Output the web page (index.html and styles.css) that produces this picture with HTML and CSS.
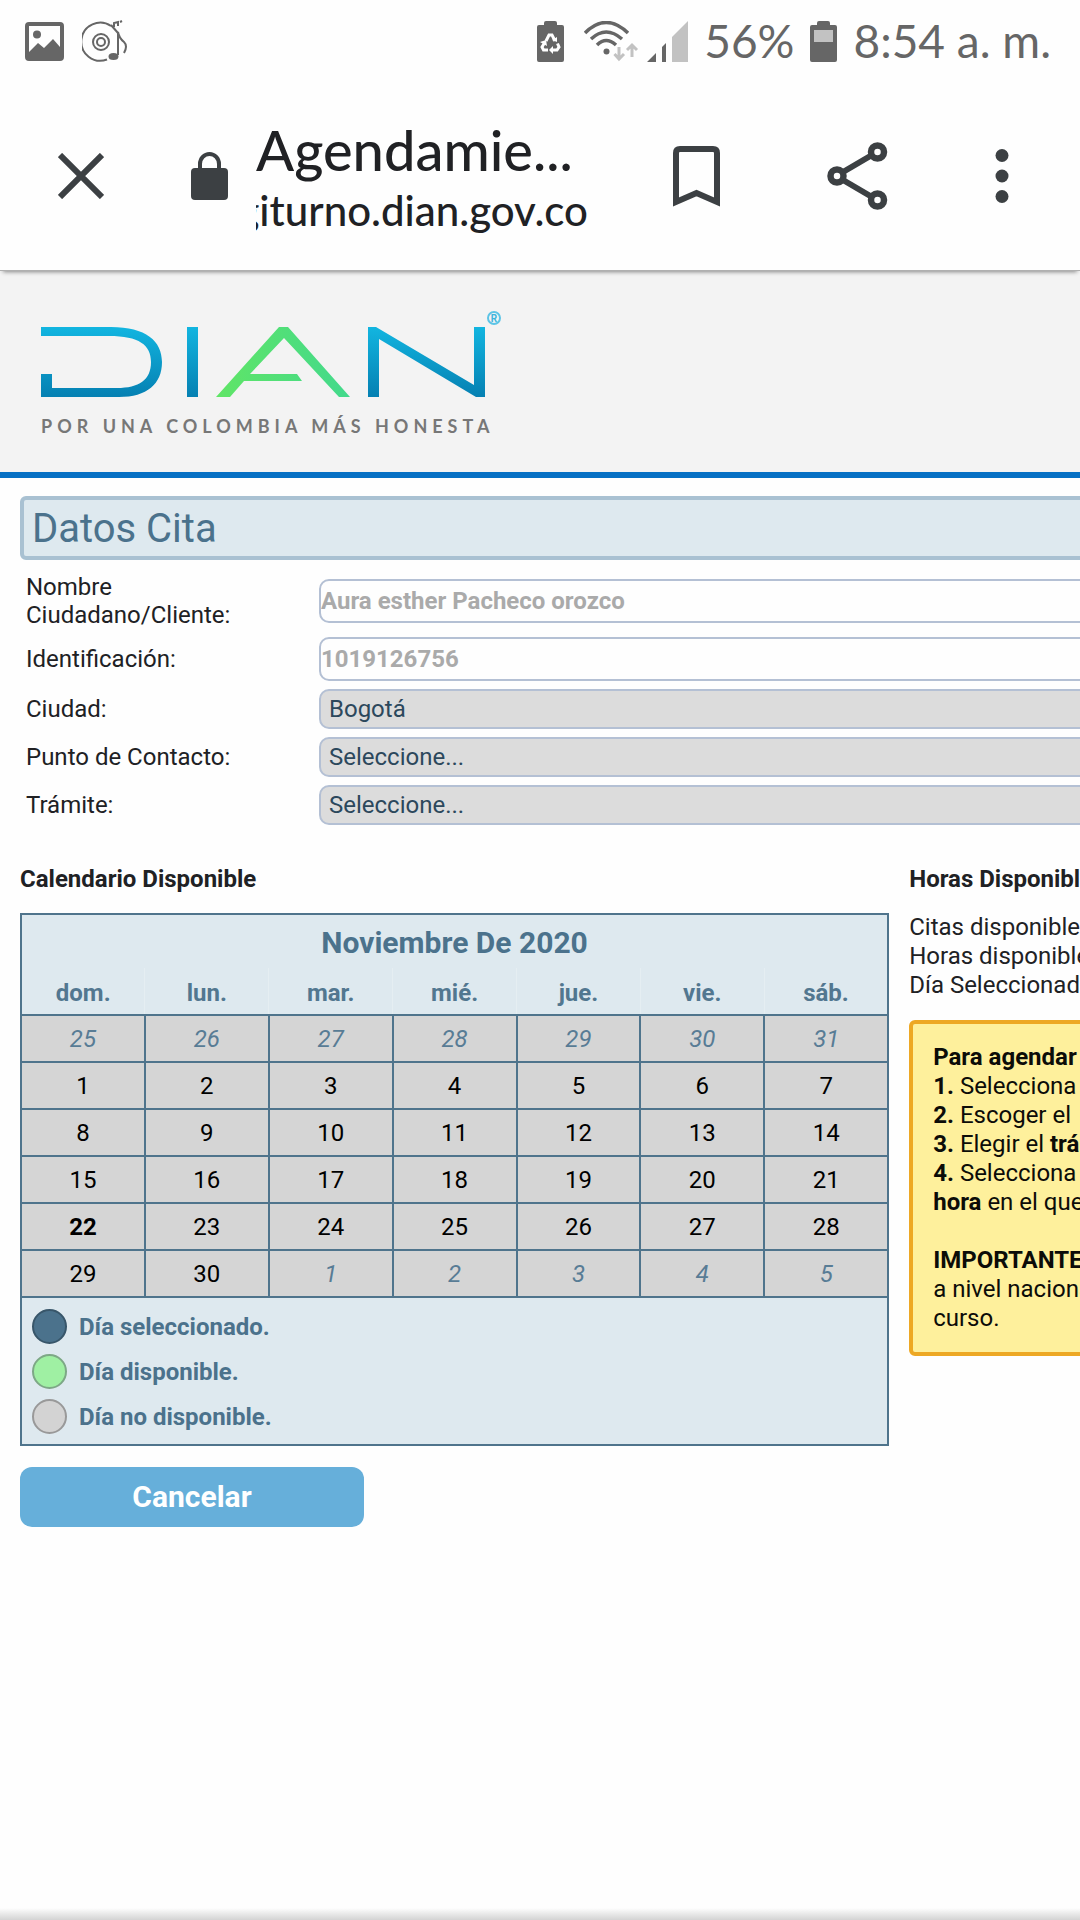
FILE: index.html
```html
<!DOCTYPE html>
<html lang="es">
<head>
<meta charset="utf-8">
<meta name="viewport" content="width=device-width, initial-scale=1">
<title>Agendamiento</title>
<link rel="stylesheet" href="styles.css">
</head>
<body>
<div class="status">
  <div class="status-group">
    <svg width="39" height="39" viewBox="0 0 39 39"><path fill="#666" fill-rule="evenodd" d="M4 0H35Q39 0 39 4V35Q39 39 35 39H4Q0 39 0 35V4Q0 0 4 0ZM4 4V30L13 21L19 26L28 17L35 25V4Z"/><circle cx="12" cy="12.500" r="4" fill="#666"/></svg>
    <svg width="46" height="42" viewBox="0 0 46 42" fill="none" stroke="#666" stroke-width="2"><path d="M29 6A19 19 0 1 0 25 39.500"/><circle cx="19" cy="22" r="8"/><circle cx="19" cy="22" r="4"/><path d="M29 5L36 13V35M36 12Q37 18 42 22Q46 26 42 33"/><ellipse cx="31.500" cy="36.500" rx="4" ry="2.500" fill="#666"/><path d="M32 7V3L36 2V6M38 2L40 1"/></svg>
  </div>
  <div class="status-group status-right">
    <svg width="27" height="41" viewBox="0 0 27 41"><path fill="#666" d="M7 4V2Q7 0 9 0H18Q20 0 20 2V4H25Q27 4 27 6V39Q27 41 25 41H2Q0 41 0 39V6Q0 4 2 4Z"/><path fill="none" stroke="#fff" stroke-width="3" d="M9 20L12 14H15L18 20M20.500 22.500L22 26L20 29H15M11 29H6.500L5 26L8 21"/><path fill="#fff" d="M15 19L20 21L20 16ZM16 25V33L12 29ZM3 21L9 19L10 25Z"/></svg>
    <svg class="wifi" width="55" height="41" viewBox="0 0 55 41" fill="none"><path stroke="#666" stroke-width="3.500" d="M1 12Q22 -9 44 12M7 18Q22 4 38 18M13 24Q22 15 32 24"/><circle cx="22.500" cy="30.500" r="3" fill="#666"/><path stroke="#c2c2c2" stroke-width="3" d="M35 26V38M30.500 33L35 38L40 33M48 36V24M43 29L48 24L53 29"/></svg>
    <svg width="41" height="41" viewBox="0 0 41 41"><path fill="#666" d="M0 41L9 32V41ZM15 26L19 22V41H15Z"/><path fill="#c2c2c2" d="M25 16L41 0V41H25Z"/></svg>
    <span>56%</span>
    <svg width="27" height="41" viewBox="0 0 27 41"><path fill="#666" d="M7 4V2Q7 0 9 0H18Q20 0 20 2V4H25Q27 4 27 6V39Q27 41 25 41H2Q0 41 0 39V6Q0 4 2 4Z"/><path fill="#c2c2c2" d="M4 9H23V21H4Z"/></svg>
    <span>8:54 a. m.</span>
  </div>
</div>
<header class="toolbar">
  <button class="tool" type="button" aria-label="Cerrar"><svg width="46" height="46" viewBox="0 0 46 46"><path stroke="#3c4043" stroke-width="6" d="M2 2L44 44M44 2L2 44"/></svg></button>
  <svg class="lock" width="37" height="48" viewBox="0 0 37 48"><rect y="16" width="37" height="32" rx="4" fill="#3c4043"/><path fill="none" stroke="#3c4043" stroke-width="4" d="M9 18V12A9.500 10 0 0 1 28 12V18"/></svg>
  <div class="address">
    <h1 class="page-name">Agendamie...</h1>
    <div class="url">giturno.dian.gov.co</div>
  </div>
  <div class="tools">
    <button class="tool" type="button" aria-label="Guardar"><svg width="47" height="61" viewBox="0 0 47 61"><path fill="none" stroke="#3c4043" stroke-width="6" d="M3 56V7Q3 3 7 3H40Q44 3 44 7V56L23.500 47Z"/></svg></button>
    <button class="tool" type="button" aria-label="Compartir"><svg width="61" height="68" viewBox="0 0 61 68" fill="none" stroke="#3c4043" stroke-width="6.500"><circle cx="10" cy="34" r="6.500"/><circle cx="50.500" cy="10" r="6.500"/><circle cx="50.500" cy="58" r="6.500"/><path stroke-width="6" d="M16 30L45 13M16 38L45 55"/></svg></button>
    <button class="tool" type="button" aria-label="Más opciones"><svg width="14" height="54" viewBox="0 0 14 54" fill="#3c4043"><circle cx="7" cy="6.500" r="6.500"/><circle cx="7" cy="27" r="6.500"/><circle cx="7" cy="47.500" r="6.500"/></svg></button>
  </div>
</header>
<div class="brand">
  <svg class="logo" width="462" height="88" viewBox="0 0 462 88" role="img" aria-label="DIAN">
    <defs>
      <linearGradient id="blue" gradientUnits="userSpaceOnUse" x1="0" y1="17" x2="0" y2="87"><stop offset="0" stop-color="#12b5e0"/><stop offset="1" stop-color="#0580b2"/></linearGradient>
      <linearGradient id="green" x1="0" y1="0" x2="1" y2="0"><stop offset="0" stop-color="#60e566"/><stop offset="1" stop-color="#42d98c"/></linearGradient>
    </defs>
    <path fill="url(#blue)" d="M0 17H70C105 17 121 31 121 52C121 74 106 87 78 87H0V64H11V78H76C98 78 110 70 110 52C110 35 98 26 68 26H0Z"/>
    <path fill="url(#blue)" d="M146 17H157V87H146Z"/>
    <path fill="url(#green)" d="M175 87L238 17H247L309 87H298L243 28L209 64H256L261 71H203L189 87Z"/>
    <path fill="url(#blue)" d="M327 17H335L433 75V17H444V87H435L338 29V87H327Z"/>
    <circle cx="453" cy="8" r="6" fill="none" stroke="#5cc4e6" stroke-width="2"/>
    <text class="reg" x="453" y="12" text-anchor="middle">R</text>
  </svg>
  <p class="tagline">POR UNA COLOMBIA MÁS HONESTA</p>
</div>
<main class="content">
  <h2 class="section-title">Datos Cita</h2>
  <form class="form">
    <label for="nombre">Nombre<br>Ciudadano/Cliente:</label>
    <input class="field" id="nombre" type="text" value="Aura esther Pacheco orozco" readonly>
    <label for="ident">Identificación:</label>
    <input class="field" id="ident" type="text" value="1019126756" readonly>
    <label for="ciudad">Ciudad:</label>
    <select class="picker" id="ciudad"><option>Bogotá</option></select>
    <label for="punto">Punto de Contacto:</label>
    <select class="picker" id="punto"><option>Seleccione...</option></select>
    <label for="tramite">Trámite:</label>
    <select class="picker" id="tramite"><option>Seleccione...</option></select>
  </form>
  <div class="columns">
    <section>
      <h3 class="heading">Calendario Disponible</h3>
      <table class="calendar">
        <thead>
          <tr class="month"><th colspan="7">Noviembre De 2020</th></tr>
          <tr class="days"><th>dom.</th><th>lun.</th><th>mar.</th><th>mié.</th><th>jue.</th><th>vie.</th><th>sáb.</th></tr>
        </thead>
        <tbody>
          <tr><td class="other">25</td><td class="other">26</td><td class="other">27</td><td class="other">28</td><td class="other">29</td><td class="other">30</td><td class="other">31</td></tr>
          <tr><td>1</td><td>2</td><td>3</td><td>4</td><td>5</td><td>6</td><td>7</td></tr>
          <tr><td>8</td><td>9</td><td>10</td><td>11</td><td>12</td><td>13</td><td>14</td></tr>
          <tr><td>15</td><td>16</td><td>17</td><td>18</td><td>19</td><td>20</td><td>21</td></tr>
          <tr><td class="today">22</td><td>23</td><td>24</td><td>25</td><td>26</td><td>27</td><td>28</td></tr>
          <tr><td>29</td><td>30</td><td class="other">1</td><td class="other">2</td><td class="other">3</td><td class="other">4</td><td class="other">5</td></tr>
        </tbody>
        <tfoot>
          <tr><td colspan="7">
            <ul class="legend">
              <li><span class="dot dot-selected"></span>Día seleccionado.</li>
              <li><span class="dot dot-free"></span>Día disponible.</li>
              <li><span class="dot dot-none"></span>Día no disponible.</li>
            </ul>
          </td></tr>
        </tfoot>
      </table>
      <button class="cancel" type="button">Cancelar</button>
    </section>
    <section class="hours">
      <h3 class="heading">Horas Disponibles</h3>
      <p class="summary">Citas disponibles<br>Horas disponibles<br>Día Seleccionado</p>
      <div class="notice">
        <b>Para agendar</b><br>
        <b>1.</b> Selecciona<br>
        <b>2.</b> Escoger el<br>
        <b>3.</b> Elegir el <b>trámite</b><br>
        <b>4.</b> Selecciona<br>
        <b>hora</b> en el que<br>
        <br>
        <b>IMPORTANTE</b><br>
        a nivel nacional<br>
        curso.
      </div>
    </section>
  </div>
</main>
<div class="bottom-shade"></div>
</body>
</html>
```
FILE: styles.css
```css
* { box-sizing: border-box; }
body {
  margin: 0;
  min-height: 100vh;
  display: flex;
  flex-direction: column;
  overflow-x: hidden;
  background: #fefefe;
  color: #202124;
  font: 24px/28px Roboto, sans-serif;
}
h1, h2, h3, p, ul { margin: 0; padding: 0; }
svg { display: block; flex: none; }

.status {
  display: flex;
  justify-content: space-between;
  align-items: center;
  height: 82px;
  padding: 0 29px 0 25px;
  color: #666;
  font: 46px/56px Lato, sans-serif;
  white-space: nowrap;
}
.status-group { display: flex; align-items: center; gap: 18px; }
.status-right { gap: 16px; }
.wifi { margin: 0 -8px 0 4px; }

.toolbar {
  position: relative;
  display: flex;
  align-items: center;
  height: 189px;
  padding: 0 71px 0 58px;
  border-bottom: 1px solid #b0b0b0;
  background: #fefefe;
  box-shadow: 0 4px 4px -3px #888;
}
.tool { padding: 0; border: 0; background: none; }
.lock { margin: 0 28px 0 87px; }
.address { flex: 1; min-width: 0; color: #202124; font-family: Lato, sans-serif; }
.page-name { padding-top: 4px; font-size: 56px; line-height: 64px; font-weight: 500; white-space: nowrap; }
.url {
  display: flex;
  justify-content: flex-end;
  overflow: hidden;
  font-size: 42px;
  line-height: 56px;
  font-weight: 500;
}
.tools { display: flex; align-items: center; gap: 107px; margin-left: 85px; }

.brand {
  height: 207px;
  padding: 39px 41px 0;
  border-bottom: 6px solid #0670c4;
  background: #f3f3f3;
}
.reg { fill: #3cb4dc; font: bold 10px Roboto, sans-serif; }
.tagline {
  padding-top: 18px;
  color: #777;
  font: bold 18px/20px Lato, sans-serif;
  letter-spacing: 5px;
  white-space: nowrap;
}

.content { flex: 1; padding: 18px 0 0 20px; overflow: hidden; }
.section-title {
  margin-right: -20px;
  padding: 1px 8px 0;
  border: 4px solid #a9c1d2;
  border-radius: 6px;
  background: #dee9ef;
  color: #4b728c;
  font-size: 40px;
  line-height: 55px;
  font-weight: 400;
}
.form {
  display: grid;
  grid-template-columns: 293px 1fr;
  align-items: center;
  gap: 8px 0;
  margin: 13px -20px 0 6px;
}
.field, .picker {
  width: 100%;
  border: 2px solid #b4c0d4;
  border-radius: 10px;
  font: 24px/28px Roboto, sans-serif;
}
.field {
  height: 44px;
  padding: 0;
  background: #fefefe;
  color: #aaa;
  font-weight: 700;
}
.picker {
  appearance: none;
  height: 40px;
  padding: 0 8px;
  background: #dcdcdc;
  color: #2c485c;
}

.columns {
  display: grid;
  grid-template-columns: 82% 1fr;
  gap: 20px;
  margin-top: 40px;
}
.heading { font-size: 24px; line-height: 28px; font-weight: 700; white-space: nowrap; }
.calendar {
  width: 100%;
  margin-top: 20px;
  table-layout: fixed;
  border-collapse: collapse;
  border: 2px solid #4f748c;
  background: #dee9ef;
  text-align: center;
}
.calendar th, .calendar td { padding: 0; }
.month { height: 54px; color: #4b728c; font-size: 30px; }
.calendar .month th { padding-top: 2px; }
.days { height: 47px; color: #527790; }
.calendar .days th { padding-top: 3px; }
.days th + th { border-left: 1px solid #e5eef2; }
.calendar tbody tr { height: 47px; }
.calendar tbody td {
  border: 2px solid #4f748c;
  background: #d5d5d5;
  color: #000;
}
.calendar tbody .other { color: #587c95; font-style: italic; }
.calendar tbody .today { font-weight: 700; }
.legend {
  display: grid;
  gap: 10px;
  padding: 11px 10px 10px;
  color: #4b728c;
  font-weight: 700;
  list-style: none;
}
.legend li { display: flex; align-items: center; gap: 12px; }
.dot { width: 35px; height: 35px; border: 2px solid; border-radius: 50%; }
.dot-selected { border-color: #38566a; background: #4b728c; }
.dot-free { border-color: #7da886; background: #9ff0a3; }
.dot-none { border-color: #999; background: #d3d3d3; }
.cancel {
  display: block;
  width: 344px;
  height: 60px;
  margin-top: 21px;
  border: 0;
  border-radius: 12px;
  background: #66afda;
  color: #fff;
  font: bold 30px/32px Roboto, sans-serif;
}

.hours { line-height: 29px; white-space: nowrap; }
.summary { margin-top: 20px; }
.notice {
  margin: 20px -20px 0 0;
  padding: 19px 20px;
  border: 4px solid #eda824;
  border-radius: 6px;
  background: #fef09c;
  color: #0c0c08;
}
.bottom-shade { height: 12px; background: linear-gradient(#fefefe, #d3d3d3); }
```
